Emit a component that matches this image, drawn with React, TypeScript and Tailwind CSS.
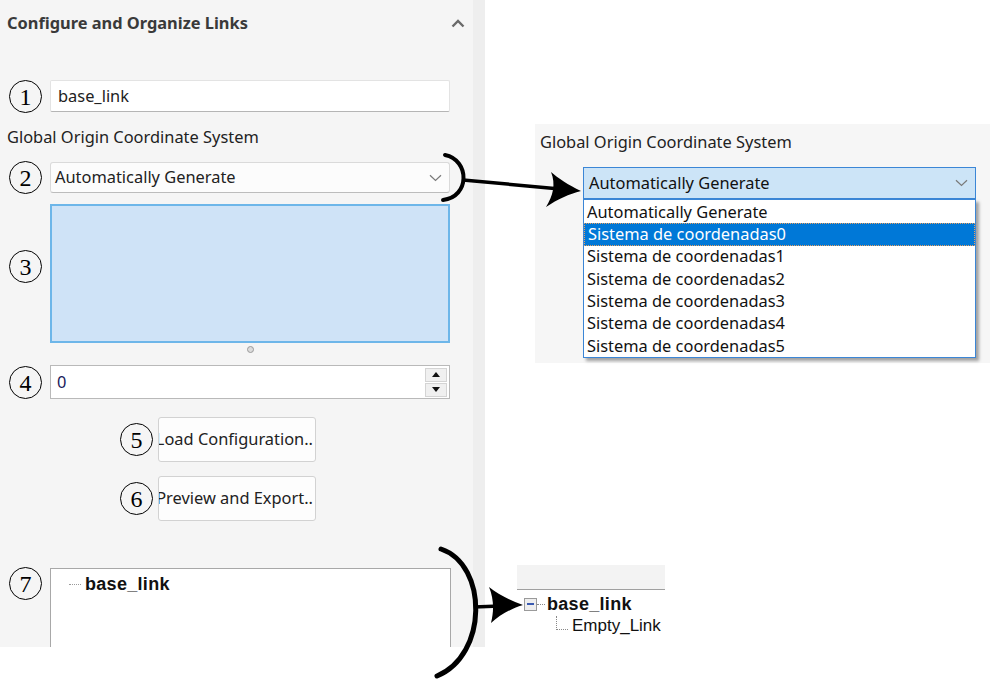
import React from "react";

const ui = { fontFamily: '"Noto Sans", "Open Sans", sans-serif' };
const serif = { fontFamily: '"Liberation Serif", "DejaVu Serif", serif' };
const arial = { fontFamily: '"Liberation Sans", Arial, sans-serif' };

function Num({ n }: { n: number }) {
  return (
    <div
      style={serif}
      className="w-[33px] h-[33px] shrink-0 rounded-full border-[1.5px] border-black flex items-center justify-center text-[24px] leading-none text-black pt-[1px]"
    >
      {n}
    </div>
  );
}

function Chevron({ className }: { className?: string }) {
  return (
    <svg className={className} width="13" height="8" viewBox="0 0 13 8" fill="none">
      <path d="M1 1.2 L6.5 6.5 L12 1.2" stroke="#7a7a7a" strokeWidth="1.2" />
    </svg>
  );
}

const items = [
  "Automatically Generate",
  "Sistema de coordenadas0",
  "Sistema de coordenadas1",
  "Sistema de coordenadas2",
  "Sistema de coordenadas3",
  "Sistema de coordenadas4",
  "Sistema de coordenadas5",
];

export default function App() {
  return (
    <div style={ui} className="relative w-[1003px] h-[693px] bg-white overflow-hidden flex items-start">
      {/* left panel */}
      <div className="flex h-[647px] shrink-0">
        <div className="w-[473px] h-full bg-[#f5f5f5] flex flex-col">
          <div className="h-[46px] flex items-center justify-between pl-[7px] pr-[8px]">
            <span className="text-[16.4px] font-bold text-[#3a3a3a]">Configure and Organize Links</span>
            <svg width="14" height="9" viewBox="0 0 14 9" fill="none">
              <path d="M1.5 7.5 L7 2 L12.5 7.5" stroke="#6a6a6a" strokeWidth="2.4" />
            </svg>
          </div>

          <div className="mt-[34px] h-[32px] flex items-center pl-[9px] gap-[8px]">
            <Num n={1} />
            <div className="w-[400px] h-full bg-white border border-[#e3e3e3] border-b-[#b5b5b5] rounded-[2px] flex items-center pl-[7px] text-[16.4px] text-[#222]">
              base_link
            </div>
          </div>

          <div className="mt-[14px] h-[22px] flex items-center pl-[7px] text-[16.4px] text-[#222]">
            Global Origin Coordinate System
          </div>

          <div className="mt-[14px] h-[31px] flex items-center pl-[9px] gap-[8px]">
            <Num n={2} />
            <div className="w-[400px] h-full bg-[#fcfcfc] border border-[#dadada] border-b-[#bcbcbc] rounded-[3px] flex items-center justify-between pl-[4px] pr-[7px] text-[16.4px] text-[#222]">
              <span>Automatically Generate</span>
              <Chevron />
            </div>
          </div>

          <div className="mt-[11px] h-[139px] flex items-start pl-[9px] gap-[8px]">
            <div className="mt-[46px]">
              <Num n={3} />
            </div>
            <div className="w-[400px] h-full bg-[#cfe3f7] border-2 border-[#6db6e9]" />
          </div>

          <div className="h-[12px] flex items-center pl-[247px]">
            <div className="w-[7px] h-[7px] rounded-full border border-[#9a9a9a] bg-[#dcdcdc]" />
          </div>

          <div className="mt-[10px] h-[34px] flex items-center pl-[9px] gap-[8px]">
            <Num n={4} />
            <div className="w-[400px] h-full bg-white border border-[#b9b9b9] flex items-center justify-between pl-[6px] pr-[2px] text-[16.4px] text-[#1a1a5a]">
              <span>0</span>
              <div className="flex flex-col gap-[1px]">
                <div className="w-[22px] h-[14px] bg-[#f0f0f0] border border-[#d4d4d4] flex items-center justify-center">
                  <svg width="8" height="5" viewBox="0 0 8 5"><path d="M0 5 L4 0 L8 5 Z" fill="#111" /></svg>
                </div>
                <div className="w-[22px] h-[14px] bg-[#f0f0f0] border border-[#d4d4d4] flex items-center justify-center">
                  <svg width="8" height="5" viewBox="0 0 8 5"><path d="M0 0 L4 5 L8 0 Z" fill="#111" /></svg>
                </div>
              </div>
            </div>
          </div>

          <div className="mt-[18px] h-[45px] flex items-center pl-[120px] gap-[5px]">
            <Num n={5} />
            <div className="w-[158px] h-full bg-[#fdfdfd] border border-[#d2d2d2] rounded-[3px] overflow-hidden flex items-center justify-end pr-[2px] text-[16.4px] text-[#222] whitespace-nowrap">
              Load Configuration..
            </div>
          </div>

          <div className="mt-[14px] h-[45px] flex items-center pl-[120px] gap-[5px]">
            <Num n={6} />
            <div className="w-[158px] h-full bg-[#fdfdfd] border border-[#d2d2d2] rounded-[3px] overflow-hidden flex items-center justify-end pr-[2px] text-[16.4px] text-[#222] whitespace-nowrap">
              Preview and Export..
            </div>
          </div>

          <div className="mt-[47px] flex-1 flex items-start pl-[9px] gap-[8px]">
            <div className="-mt-[1px]">
              <Num n={7} />
            </div>
            <div className="w-[401px] h-full bg-white border-l border-t border-r border-[#a8a8a8] flex items-start pl-[18px] pt-[4px]">
              <div className="flex items-center h-[22px] gap-[4px]">
                <div className="w-[12px] border-t border-dotted border-[#9a9a9a]" />
                <span style={arial} className="text-[18px] font-bold text-[#111] tracking-[0.3px]">base_link</span>
              </div>
            </div>
          </div>
        </div>
        <div className="w-[12px] h-full bg-[#eeeeee]" />
      </div>

      {/* right column */}
      <div className="flex flex-col">
        <div className="ml-[50px] mt-[124px] w-[455px] h-[239px] bg-[#f6f6f6] flex flex-col">
          <div className="pt-[7px] h-[29px] flex items-center pl-[5px] text-[16.4px] text-[#222]">
            Global Origin Coordinate System
          </div>
          <div className="ml-[48px] mt-[14px] w-[393px] flex flex-col">
            <div className="h-[32px] bg-[#cce4f7] border border-[#3b86d6] flex items-center justify-between pl-[5px] pr-[7px] text-[16.4px] text-[#111]">
              <span>Automatically Generate</span>
              <Chevron />
            </div>
            <div className="h-[159px] bg-white border border-[#3b86d6] shadow-[3px_3px_3px_rgba(0,0,0,0.35)] flex flex-col py-[1px]">
              {items.map((it, i) => (
                <div
                  key={it}
                  className={
                    i === 1
                      ? "h-[22.3px] flex items-center pl-[3px] text-[16.4px] text-white bg-[#0078d7] border border-dotted border-[#e8a060]"
                      : "h-[22.3px] flex items-center pl-[3px] text-[16.4px] text-[#111]"
                  }
                >
                  {it}
                </div>
              ))}
            </div>
          </div>
        </div>

        <div style={arial} className="ml-[32px] mt-[202px] w-[148px] flex flex-col">
          <div className="h-[25px] bg-[#f3f3f3] border-b border-[#a0a0a0]" />
          <div className="flex items-center h-[26px] pl-[7px] pt-[2px]">
            <div className="w-[13px] h-[13px] border border-[#9a9a9a] bg-[#eeeeee] flex items-center justify-center">
              <div className="w-[7px] h-[1.5px] bg-[#3a5ab0]" />
            </div>
            <div className="w-[8px] border-t border-dotted border-[#888]" />
            <span className="pl-[2px] text-[18px] font-bold text-[#111] tracking-[0.3px]">base_link</span>
          </div>
          <div className="flex items-start h-[24px] pl-[39px]">
            <div className="w-[12px] h-[14px] border-l border-b border-dotted border-[#888]" />
            <span className="pl-[4px] text-[17px] text-[#111] leading-[24px] -mt-[2px]">Empty_Link</span>
          </div>
        </div>
      </div>

      {/* annotation marks */}
      <svg className="absolute inset-0 pointer-events-none" width="1003" height="693" viewBox="0 0 1003 693" fill="none">
        <path d="M445 155 C470 160 470 197 443 200" stroke="#000" strokeWidth="4" strokeLinecap="round" />
        <path d="M463 180 L560 189" stroke="#000" strokeWidth="3.5" />
        <path d="M581 191 C568 185 558 178 551 172 C556 184 553 196 546 207 C558 199 569 194 581 191 Z" fill="#000" />
        <path d="M441 549 C488 565 488 655 437 676" stroke="#000" strokeWidth="5" strokeLinecap="round" />
        <path d="M474 607 L500 606" stroke="#000" strokeWidth="3.5" />
        <path d="M523 605 C509 600 498 594 489 587 C494 599 494 611 491 623 C500 615 510 609 523 605 Z" fill="#000" />
      </svg>
    </div>
  );
}
